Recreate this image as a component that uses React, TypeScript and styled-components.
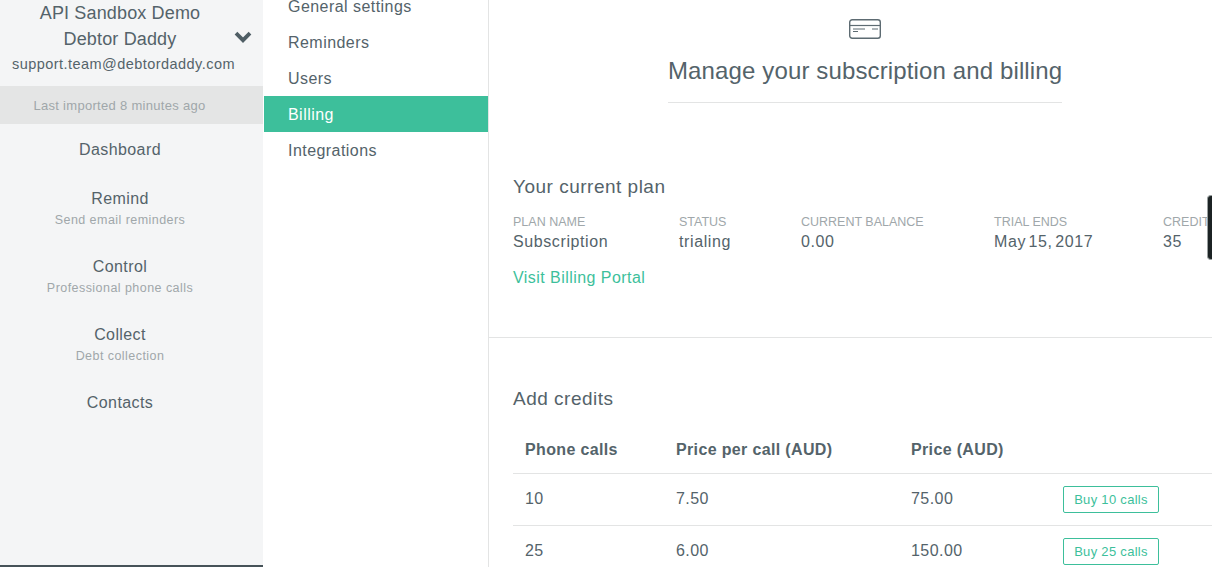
import { createGlobalStyle } from "styled-components"
import styled from "styled-components"

const GlobalStyle = createGlobalStyle`
    html, body {
        margin: 0;
        padding: 0;
        height: 100%;
        overflow: hidden;
        background: white;
    }
    * {
        box-sizing: border-box;
    }
`

const textColor = "#54636a"
const mutedColor = "#a0a7aa"
const green = "#3dbf9b"
const lineColor = "#e3e4e4"

const Shell = styled.div`
    display: flex;
    width: 1212px;
    height: 567px;
    overflow: hidden;
    position: relative;
    font-family: "Liberation Sans", Arial, sans-serif;
    color: ${textColor};
    letter-spacing: 0.45px;
`

const Sidebar = styled.aside`
    flex: 0 0 263px;
    height: 567px;
    background-color: #f4f5f6;
    border-bottom: 2px solid #465258;
    text-align: center;
`

const Account = styled.div`
    position: relative;
    padding-bottom: 12px;
`

const AccountName = styled.div`
    width: 240px;
    font-size: 18px;
    line-height: 26px;
    letter-spacing: 0.15px;
`

const AccountEmail = styled.div`
    width: 240px;
    padding-left: 7px;
    font-size: 14.5px;
    line-height: 22px;
    height: 22px;
    padding-top: 1px;
    letter-spacing: 0.45px;
    white-space: nowrap;
`

const Chevron = styled.svg`
    position: absolute;
    left: 234px;
    top: 30px;
    width: 18px;
    height: 14px;
`

const ImportBar = styled.div`
    width: 100%;
    height: 38px;
    padding: 1px 24px 0 0;
    line-height: 38px;
    font-size: 13px;
    background-color: #e4e5e5;
    color: ${mutedColor};
    letter-spacing: 0.3px;
    white-space: nowrap;
`

const MainNav = styled.nav`
    width: 240px;
    padding-top: 2px;
`

const MainNavItem = styled.div<{ $hasSub?: boolean }>`
    padding: 12px 0 ${(p) => (p.$hasSub ? 14 : 13)}px;
`

const MainNavTitle = styled.div`
    font-size: 16px;
    line-height: 24px;
    letter-spacing: 0.4px;
`

const MainNavSub = styled.div`
    font-size: 12.5px;
    line-height: 18px;
    color: ${mutedColor};
    letter-spacing: 0.45px;
`

const SubNav = styled.nav`
    flex: 0 0 225px;
    height: 579px;
    margin: -12px 0 0 1px;
    border-right: 1px solid ${lineColor};
`

const SubNavItem = styled.div<{ $active?: boolean }>`
    height: 36px;
    line-height: 38px;
    padding-left: 24px;
    font-size: 16px;
    background-color: ${(p) => (p.$active ? green : "transparent")};
    color: ${(p) => (p.$active ? "white" : textColor)};
`

const Main = styled.main`
    flex: 0 0 752px;
    min-width: 0;
    height: 567px;
`

const PageHead = styled.header`
    display: flex;
    flex-direction: column;
    align-items: center;
    padding-top: 19px;
`

const CardIcon = styled.svg`
    width: 32px;
    height: 20px;
    display: block;
`

const PageTitle = styled.h1`
    margin: 0;
    width: 394px;
    padding: 16px 0 15px;
    border-bottom: 1px solid ${lineColor};
    font-size: 24px;
    line-height: 32px;
    font-weight: 400;
    text-align: center;
    white-space: nowrap;
    letter-spacing: 0.13px;
`

const Section = styled.section`
    padding: 71px 24px 0;
`

const SectionTitle = styled.h2`
    margin: 0;
    font-size: 19px;
    line-height: 26px;
    font-weight: 400;
    letter-spacing: 0.5px;
`

const PlanGrid = styled.div`
    display: grid;
    grid-template-columns: 166px 122px 193px 169px 80px;
    margin-top: 14px;
`

const PlanLabel = styled.div`
    font-size: 12.5px;
    line-height: 16px;
    color: ${mutedColor};
    letter-spacing: 0;
    white-space: nowrap;
`

const PlanValue = styled.div`
    font-size: 16px;
    line-height: 24px;
    white-space: nowrap;
    letter-spacing: 0.6px;
    word-spacing: -2.5px;
`

const PortalLink = styled.a`
    display: block;
    margin-top: 12px;
    font-size: 16px;
    line-height: 24px;
    color: ${green};
`

const Divider = styled.hr`
    margin: 47px 0 0;
    border: 0;
    border-top: 1px solid ${lineColor};
`

const CreditsSection = styled(Section)`
    padding-top: 48px;
`

const Table = styled.table`
    width: 100%;
    margin-top: 13px;
    border-collapse: collapse;
    table-layout: fixed;
`

const HeadCell = styled.th<{ $width: number }>`
    width: ${(p) => p.$width}px;
    height: 48px;
    padding: 2px 12px 0;
    font-size: 16px;
    font-weight: 700;
    text-align: left;
    letter-spacing: 0.35px;
    border-bottom: 1px solid ${lineColor};
`

const Cell = styled.td`
    height: 52px;
    padding: 0 12px;
    font-size: 16px;
    border-bottom: 1px solid ${lineColor};
`

const BuyButton = styled.button`
    display: block;
    width: 96px;
    height: 27px;
    padding: 1px 0 0;
    background: white;
    border: 1px solid ${green};
    border-radius: 2px;
    color: ${green};
    font-family: inherit;
    font-size: 13px;
    letter-spacing: 0.3px;
`

const OverlayTab = styled.div`
    position: absolute;
    right: 0;
    top: 195px;
    width: 5px;
    height: 65px;
    background-color: #1c2324;
    border: 1px solid #9aa0a0;
    border-right: 0;
    border-radius: 4px 0 0 4px;
`

const plan = [
    { label: "PLAN NAME", value: "Subscription" },
    { label: "STATUS", value: "trialing" },
    { label: "CURRENT BALANCE", value: "0.00" },
    { label: "TRIAL ENDS", value: "May 15, 2017" },
    { label: "CREDITS", value: "35" },
]

const credits = [
    { calls: 10, each: "7.50", price: "75.00" },
    { calls: 25, each: "6.00", price: "150.00" },
]

export default function App() {
    return (
        <>
            <GlobalStyle />
            <Shell>
                <Sidebar>
                    <Account>
                        <AccountName>API Sandbox Demo</AccountName>
                        <AccountName>Debtor Daddy</AccountName>
                        <AccountEmail>support.team@debtordaddy.com</AccountEmail>
                        <Chevron viewBox="0 0 18 14">
                            <path d="M2 3.200L9 10.200l7-7" fill="none" stroke="#4f5e65" strokeWidth="3.800" />
                        </Chevron>
                    </Account>
                    <ImportBar>Last imported 8 minutes ago</ImportBar>
                    <MainNav>
                        <MainNavItem>
                            <MainNavTitle>Dashboard</MainNavTitle>
                        </MainNavItem>
                        <MainNavItem $hasSub>
                            <MainNavTitle>Remind</MainNavTitle>
                            <MainNavSub>Send email reminders</MainNavSub>
                        </MainNavItem>
                        <MainNavItem $hasSub>
                            <MainNavTitle>Control</MainNavTitle>
                            <MainNavSub>Professional phone calls</MainNavSub>
                        </MainNavItem>
                        <MainNavItem $hasSub>
                            <MainNavTitle>Collect</MainNavTitle>
                            <MainNavSub>Debt collection</MainNavSub>
                        </MainNavItem>
                        <MainNavItem>
                            <MainNavTitle>Contacts</MainNavTitle>
                        </MainNavItem>
                    </MainNav>
                </Sidebar>
                <SubNav>
                    <SubNavItem>General settings</SubNavItem>
                    <SubNavItem>Reminders</SubNavItem>
                    <SubNavItem>Users</SubNavItem>
                    <SubNavItem $active>Billing</SubNavItem>
                    <SubNavItem>Integrations</SubNavItem>
                </SubNav>
                <Main>
                    <PageHead>
                        <CardIcon viewBox="0 0 32 20">
                            <rect x="0.7" y="0.7" width="30.6" height="18.600" rx="2.500" fill="none" stroke="#5d6b72" strokeWidth="1.400" />
                            <path d="M1 6.500h30" stroke="#5d6b72" strokeWidth="1.200" />
                            <path d="M4 10h12M4 12.500h5M23 10h6" stroke="#5d6b72" strokeWidth="1" />
                        </CardIcon>
                        <PageTitle>Manage your subscription and billing</PageTitle>
                    </PageHead>
                    <Section>
                        <SectionTitle>Your current plan</SectionTitle>
                        <PlanGrid>
                            {plan.map((item) => (
                                <div key={item.label}>
                                    <PlanLabel>{item.label}</PlanLabel>
                                    <PlanValue>{item.value}</PlanValue>
                                </div>
                            ))}
                        </PlanGrid>
                        <PortalLink>Visit Billing Portal</PortalLink>
                    </Section>
                    <Divider />
                    <CreditsSection>
                        <SectionTitle>Add credits</SectionTitle>
                        <Table>
                            <thead>
                                <tr>
                                    <HeadCell $width={151}>Phone calls</HeadCell>
                                    <HeadCell $width={235}>Price per call (AUD)</HeadCell>
                                    <HeadCell $width={152}>Price (AUD)</HeadCell>
                                    <HeadCell $width={166}></HeadCell>
                                </tr>
                            </thead>
                            <tbody>
                                {credits.map((row) => (
                                    <tr key={row.calls}>
                                        <Cell>{row.calls}</Cell>
                                        <Cell>{row.each}</Cell>
                                        <Cell>{row.price}</Cell>
                                        <Cell>
                                            <BuyButton>Buy {row.calls} calls</BuyButton>
                                        </Cell>
                                    </tr>
                                ))}
                            </tbody>
                        </Table>
                    </CreditsSection>
                </Main>
                <OverlayTab />
            </Shell>
        </>
    )
}
